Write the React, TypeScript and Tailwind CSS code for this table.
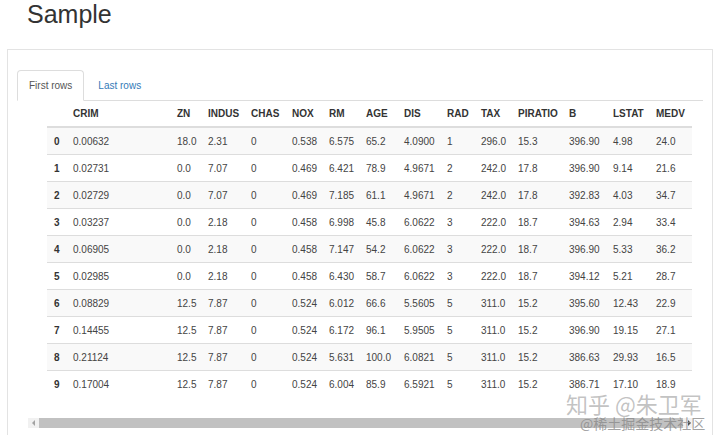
const columns = ['', 'CRIM', 'ZN', 'INDUS', 'CHAS', 'NOX', 'RM', 'AGE', 'DIS', 'RAD', 'TAX', 'PIRATIO', 'B', 'LSTAT', 'MEDV'];

const rows = [
    ['0.00632', '18.0', '2.31', '0', '0.538', '6.575', '65.2', '4.0900', '1', '296.0', '15.3', '396.90', '4.98', '24.0'],
    ['0.02731', '0.0', '7.07', '0', '0.469', '6.421', '78.9', '4.9671', '2', '242.0', '17.8', '396.90', '9.14', '21.6'],
    ['0.02729', '0.0', '7.07', '0', '0.469', '7.185', '61.1', '4.9671', '2', '242.0', '17.8', '392.83', '4.03', '34.7'],
    ['0.03237', '0.0', '2.18', '0', '0.458', '6.998', '45.8', '6.0622', '3', '222.0', '18.7', '394.63', '2.94', '33.4'],
    ['0.06905', '0.0', '2.18', '0', '0.458', '7.147', '54.2', '6.0622', '3', '222.0', '18.7', '396.90', '5.33', '36.2'],
    ['0.02985', '0.0', '2.18', '0', '0.458', '6.430', '58.7', '6.0622', '3', '222.0', '18.7', '394.12', '5.21', '28.7'],
    ['0.08829', '12.5', '7.87', '0', '0.524', '6.012', '66.6', '5.5605', '5', '311.0', '15.2', '395.60', '12.43', '22.9'],
    ['0.14455', '12.5', '7.87', '0', '0.524', '6.172', '96.1', '5.9505', '5', '311.0', '15.2', '396.90', '19.15', '27.1'],
    ['0.21124', '12.5', '7.87', '0', '0.524', '5.631', '100.0', '6.0821', '5', '311.0', '15.2', '386.63', '29.93', '16.5'],
    ['0.17004', '12.5', '7.87', '0', '0.524', '6.004', '85.9', '6.5921', '5', '311.0', '15.2', '386.71', '17.10', '18.9'],
];

// column widths measured off the screenshot
const grid =
    'grid grid-cols-[18px_104px_31px_43px_41px_37px_37px_38px_43px_34px_37px_51px_44px_43px_44px] items-center';

export default function App() {
    return (
        <div className="relative h-[435px] w-[720px] overflow-hidden bg-white font-['Liberation_Sans',Arial,sans-serif] text-[#333]">
            <h1 className="pl-[27px] text-[25px] leading-[28px] font-normal text-[#333]">Sample</h1>

            <div className="mt-[21px] ml-[7px] mr-[7px] h-[400px] border border-[#e3e3e3] pt-[20px] pl-[9px] pr-[9px]">
                {/* Tabs */}
                <div className="flex h-[31px] border-b border-[#ddd] text-[10px]">
                    <div className="-mb-px flex h-[31px] items-center rounded-t-[4px] border border-[#ddd] border-b-white bg-white px-[11px] text-[#555]">
                        First rows
                    </div>
                    <div className="ml-[2px] flex h-[30px] items-center px-[12px] text-[#337ab7]">Last rows</div>
                </div>

                {/* Table */}
                <div className="ml-[30px] w-[645px] text-[10px]">
                    <div className={`${grid} h-[27px] border-b-2 border-[#ddd] font-bold`}>
                        {columns.map((c, i) => (
                            <div key={i} className={i === 0 ? 'pl-[7px]' : 'pl-2'}>
                                {c}
                            </div>
                        ))}
                    </div>
                    {rows.map((row, r) => (
                        <div
                            key={r}
                            className={`${grid} ${r === 0 ? 'h-[26px]' : 'h-[27px] border-t border-[#ddd]'} ${
                                r % 2 === 0 ? 'bg-[#f9f9f9]' : 'bg-white'
                            }`}
                        >
                            <div className="pl-[7px] font-bold">{r}</div>
                            {row.map((v, i) => (
                                <div key={i} className="pl-2 text-[#444]">
                                    {v}
                                </div>
                            ))}
                        </div>
                    ))}
                </div>

                {/* Horizontal scrollbar */}
                <div className="mt-[21px] ml-[11px] flex h-[10px] w-[666px] bg-[#f1f1f1]">
                    <div className="flex w-[10px] items-center justify-center">
                        <div className="h-0 w-0 border-y-[3px] border-r-[3px] border-y-transparent border-r-[#a3a3a3]" />
                    </div>
                    <div className="mx-px flex-1 bg-[#c1c1c1]" />
                    <div className="flex w-[10px] items-center justify-center">
                        <div className="h-0 w-0 border-y-[3px] border-l-[3px] border-y-transparent border-l-[#505050]" />
                    </div>
                </div>
            </div>

            {/* Watermark */}
            <div className="pointer-events-none absolute left-[566px] top-[391px] font-['Noto_Sans_CJK_SC',sans-serif] text-[22px] leading-[24px] text-[#9a9a9a]/60">
                知乎 @朱卫军
            </div>
            <div className="pointer-events-none absolute left-[580px] top-[415px] font-['Noto_Sans_CJK_SC',sans-serif] text-[14px] leading-[17px] text-[#8a8a8a]/80">
                @稀土掘金技术社区
            </div>
        </div>
    );
}
